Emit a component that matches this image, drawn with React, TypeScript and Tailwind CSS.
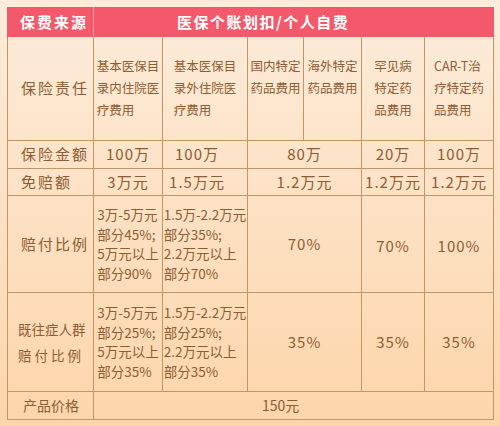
import { ReactNode } from "react";

interface CellProps {
  children?: ReactNode;
  className?: string;
}

const Cell = ({ children, className = "" }: CellProps) => {
  return (
    <div
      className={`flex border-r border-b border-[#c39564] text-[#8d5c32] ${className}`}
    >
      {children}
    </div>
  );
};

const Lines = ({ lines, className = "" }: { lines: string[]; className?: string }) => {
  return (
    <div className={`text-left ${className}`}>
      {lines.map((line) => (
        <div key={line} className="whitespace-nowrap">
          {line}
        </div>
      ))}
    </div>
  );
};

const Label = ({ children, className = "" }: CellProps) => {
  return (
    <Cell className={`items-center border-l ${className}`}>{children}</Cell>
  );
};

const Value = ({ children, className = "" }: CellProps) => {
  return (
    <Cell className={`items-center justify-center text-[15px] tracking-[1px] ${className}`}>
      {children}
    </Cell>
  );
};

const Duty = ({ lines }: { lines: string[] }) => {
  return (
    <Cell className="justify-center items-start pt-[18px]">
      <Lines lines={lines} className="text-[12.5px] leading-[22px]" />
    </Cell>
  );
};

const Ratio = ({ lines }: { lines: string[] }) => {
  return (
    <Cell className="justify-center items-center">
      <Lines lines={lines} className="text-[13.5px] leading-[19.5px]" />
    </Cell>
  );
};

const App = () => {
  return (
    <div className="h-[426px] w-[500px] overflow-hidden bg-linear-to-b from-[#fcecdb] to-[#fdd5aa] pt-[7px] pl-[7px] font-['Noto_Sans_CJK_SC','Noto_Sans',sans-serif]">
      <div className="grid w-[487px] grid-cols-[87px_69px_85px_56px_58px_63px_69px] grid-rows-[30px_104px_28px_27px_97px_99px_28px]">
        {/* header */}
        <div className="flex items-center border-r border-[#f79ba4] bg-[#f3596b] pl-[13px] text-[15px] font-bold tracking-[2px] text-white">
          保费来源
        </div>
        <div className="col-span-6 flex items-center bg-[#f3596b] pl-[83px] text-[15px] font-bold tracking-[1.5px] text-white">
          医保个账划扣/个人自费
        </div>

        {/* 保险责任 */}
        <Label className="pl-[13px] text-[15px] tracking-[2px]">保险责任</Label>
        <Duty lines={["基本医保目", "录内住院医", "疗费用"]} />
        <Duty lines={["基本医保目", "录外住院医", "疗费用"]} />
        <Duty lines={["国内特定", "药品费用"]} />
        <Duty lines={["海外特定", "药品费用"]} />
        <Duty lines={["罕见病", "特定药", "品费用"]} />
        <Duty lines={["CAR-T治", "疗特定药", "品费用"]} />

        {/* 保险金额 */}
        <Label className="pl-[13px] text-[15px] tracking-[2px]">保险金额</Label>
        <Value>100万</Value>
        <Value className="pr-[16px]">100万</Value>
        <Value className="col-span-2">80万</Value>
        <Value>20万</Value>
        <Value>100万</Value>

        {/* 免赔额 */}
        <Label className="pl-[13px] text-[15px] tracking-[2px]">免赔额</Label>
        <Value>3万元</Value>
        <Value className="pr-[16px]">1.5万元</Value>
        <Value className="col-span-2">1.2万元</Value>
        <Value className="tracking-[0px]">1.2万元</Value>
        <Value className="tracking-[0px]">1.2万元</Value>

        {/* 赔付比例 */}
        <Label className="pl-[13px] text-[15px] tracking-[2px]">赔付比例</Label>
        <Ratio lines={["3万-5万元", "部分45%;", "5万元以上", "部分90%"]} />
        <Ratio lines={["1.5万-2.2万元", "部分35%;", "2.2万元以上", "部分70%"]} />
        <Value className="col-span-2">70%</Value>
        <Value className="pt-[4px]">70%</Value>
        <Value className="pt-[4px]">100%</Value>

        {/* 既往症人群 */}
        <Label className="pl-[10px]">
          <div className="text-[13.5px] leading-[26px]">
            <div>既往症人群</div>
            <div className="tracking-[3px]">赔付比例</div>
          </div>
        </Label>
        <Ratio lines={["3万-5万元", "部分25%;", "5万元以上", "部分35%"]} />
        <Ratio lines={["1.5万-2.2万元", "部分25%;", "2.2万元以上", "部分35%"]} />
        <Value className="col-span-2">35%</Value>
        <Value>35%</Value>
        <Value>35%</Value>

        {/* 产品价格 */}
        <Label className="pl-[15px] text-[14px]">产品价格</Label>
        <Cell className="col-span-6 items-center pl-[168px] text-[14px]">150元</Cell>
      </div>
    </div>
  );
};

export default App;
